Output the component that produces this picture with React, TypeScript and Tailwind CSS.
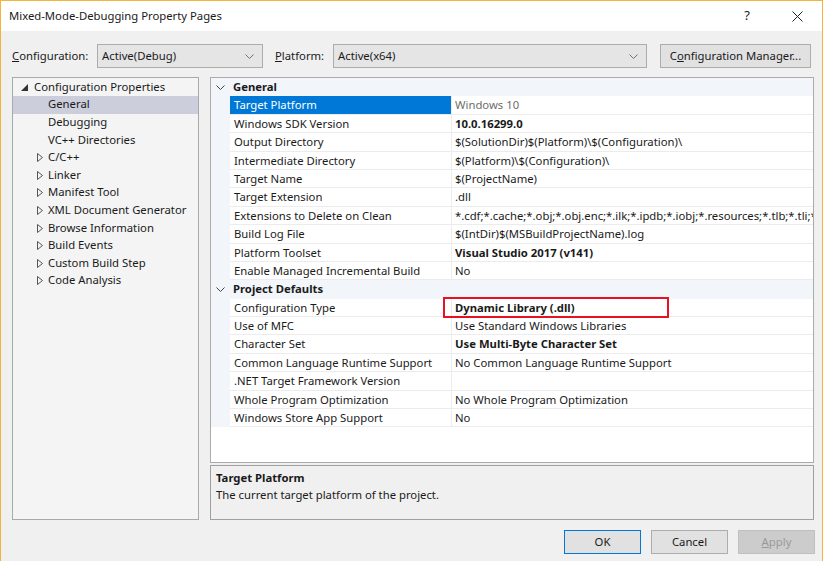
import React from 'react';

const font = { fontFamily: '"Noto Sans", "Open Sans", sans-serif' };

type Row = { name: string; value: string; bold?: boolean; dim?: boolean; selected?: boolean; marked?: boolean };

const general: Row[] = [
  { name: 'Target Platform', value: 'Windows 10', dim: true, selected: true },
  { name: 'Windows SDK Version', value: '10.0.16299.0', bold: true },
  { name: 'Output Directory', value: '$(SolutionDir)$(Platform)\\$(Configuration)\\' },
  { name: 'Intermediate Directory', value: '$(Platform)\\$(Configuration)\\' },
  { name: 'Target Name', value: '$(ProjectName)' },
  { name: 'Target Extension', value: '.dll' },
  {
    name: 'Extensions to Delete on Clean',
    value: '*.cdf;*.cache;*.obj;*.obj.enc;*.ilk;*.ipdb;*.iobj;*.resources;*.tlb;*.tli;*.tlh;*.tmp;*.rsp;*.pgc;*.pgd;*.meta',
  },
  { name: 'Build Log File', value: '$(IntDir)$(MSBuildProjectName).log' },
  { name: 'Platform Toolset', value: 'Visual Studio 2017 (v141)', bold: true },
  { name: 'Enable Managed Incremental Build', value: 'No' },
];

const defaults: Row[] = [
  { name: 'Configuration Type', value: 'Dynamic Library (.dll)', bold: true, marked: true },
  { name: 'Use of MFC', value: 'Use Standard Windows Libraries' },
  { name: 'Character Set', value: 'Use Multi-Byte Character Set', bold: true },
  { name: 'Common Language Runtime Support', value: 'No Common Language Runtime Support' },
  { name: '.NET Target Framework Version', value: '' },
  { name: 'Whole Program Optimization', value: 'No Whole Program Optimization' },
  { name: 'Windows Store App Support', value: 'No' },
];

const treeItems = [
  { label: 'General', selected: true },
  { label: 'Debugging' },
  { label: 'VC++ Directories' },
  { label: 'C/C++', collapsed: true },
  { label: 'Linker', collapsed: true },
  { label: 'Manifest Tool', collapsed: true },
  { label: 'XML Document Generator', collapsed: true },
  { label: 'Browse Information', collapsed: true },
  { label: 'Build Events', collapsed: true },
  { label: 'Custom Build Step', collapsed: true },
  { label: 'Code Analysis', collapsed: true },
];

function Chevron({ color = '#606060' }: { color?: string }) {
  return (
    <svg width="9" height="5" viewBox="0 0 9 5">
      <polyline points="0.5,0.5 4.5,4.5 8.5,0.5" fill="none" stroke={color} strokeWidth="1" />
    </svg>
  );
}

function Combo({ value, width }: { value: string; width: string }) {
  return (
    <div className={`${width} h-[24px] flex items-center justify-between bg-[#e5e5e5] border border-[#acacac] pl-[4px] pr-[8px]`}>
      <span>{value}</span>
      <Chevron color="#707070" />
    </div>
  );
}

function Category({ title }: { title: string }) {
  return (
    <div className="flex h-[18.4px] bg-[#f2f5fa]">
      <div className="w-[19px] shrink-0 flex items-center justify-center">
        <Chevron color="#444" />
      </div>
      <div className="flex-1 pl-[3px] font-bold leading-[18px]">{title}</div>
    </div>
  );
}

function PropRow({ row }: { row: Row }) {
  return (
    <div className="flex h-[18.4px]">
      <div className="w-[19px] shrink-0 bg-[#f2f5fa]" />
      <div
        className={`w-[222px] shrink-0 border-r border-b border-[#ececec] pl-[4px] leading-[17px] whitespace-nowrap overflow-hidden ${
          row.selected ? 'bg-[#0078d7] text-white' : ''
        }`}
      >
        {row.name}
      </div>
      <div className="relative flex-1 min-w-0 border-b border-[#ececec] pl-[3px] leading-[17px] whitespace-nowrap">
        <div className={`overflow-hidden ${row.bold ? 'font-bold' : ''} ${row.dim ? 'text-[#6d6d6d]' : ''}`}>{row.value || '\u00a0'}</div>
        {row.marked && <div className="absolute left-[-9px] top-[-2px] w-[226px] h-[21px] border-2 border-[#e81123]" />}
      </div>
    </div>
  );
}

function Btn({ children, focused, disabled }: { children: React.ReactNode; focused?: boolean; disabled?: boolean }) {
  return (
    <div
      className={`w-[77px] h-[24px] flex items-center justify-center border ${
        disabled
          ? 'bg-[#cccccc] border-[#bfbfbf] text-[#9a9a9a]'
          : focused
          ? 'bg-[#e1e1e1] border-[#0078d7]'
          : 'bg-[#e1e1e1] border-[#adadad]'
      }`}
    >
      {children}
    </div>
  );
}

export default function App() {
  return (
    <div className="w-[823px] h-[561px] bg-[#f0f0f0] border-l border-t border-r border-[#f2b53a] text-[11.3px] text-[#1a1a1a] overflow-hidden" style={font}>
      {/* title bar */}
      <div className="h-[30px] bg-white flex items-center pl-[8px]">
        <span className="flex-1">Mixed-Mode-Debugging Property Pages</span>
        <span className="w-[50px] text-center text-[13px]">?</span>
        <div className="w-[50px] flex items-center justify-center">
          <svg width="11" height="11" viewBox="0 0 11 11">
            <path d="M0.5 0.5 L10.5 10.5 M10.5 0.5 L0.5 10.5" stroke="#222" strokeWidth="1" />
          </svg>
        </div>
      </div>

      {/* configuration row */}
      <div className="flex items-center mt-[13px] pl-[11px]">
        <span className="w-[85px]">
          <span className="underline">C</span>onfiguration:
        </span>
        <Combo value="Active(Debug)" width="w-[166px]" />
        <span className="w-[58px] ml-[12px]">
          <span className="underline">P</span>latform:
        </span>
        <Combo value="Active(x64)" width="w-[314px]" />
        <div className="ml-[13px] w-[151px] h-[24px] flex items-center justify-center bg-[#e1e1e1] border border-[#adadad]">
          <span>
            C<span className="underline">o</span>nfiguration Manager...
          </span>
        </div>
      </div>

      {/* panels */}
      <div className="flex mt-[9px] pl-[11px] gap-[11px] h-[443px]">
        {/* tree */}
        <div className="w-[187px] h-[443px] bg-[#f4f4f4] border border-[#a9a9a9] pt-[0.5px]">
          <div className="flex items-center h-[17.6px] pl-[8px]">
            <svg width="7" height="7" viewBox="0 0 7 7" className="mr-[6px]">
              <polygon points="7,0 7,7 0,7" fill="#333" />
            </svg>
            <span>Configuration Properties</span>
          </div>
          {treeItems.map((t) => (
            <div key={t.label} className={`flex items-center h-[17.6px] ${t.selected ? 'bg-[#cccedb]' : ''}`}>
              <div className="w-[34px] flex justify-end pr-[4px]">
                {t.collapsed && (
                  <svg width="6" height="9" viewBox="0 0 6 9">
                    <polygon points="0.5,0.5 5.5,4.5 0.5,8.5" fill="none" stroke="#555" strokeWidth="1" />
                  </svg>
                )}
              </div>
              <span className="pl-[1px]">{t.label}</span>
            </div>
          ))}
        </div>

        {/* grid + description */}
        <div className="w-[604px] flex flex-col">
          <div className="h-[387px] bg-white border border-[#ababab] overflow-hidden">
            <Category title="General" />
            {general.map((r) => (
              <PropRow key={r.name} row={r} />
            ))}
            <Category title="Project Defaults" />
            {defaults.map((r) => (
              <PropRow key={r.name} row={r} />
            ))}
          </div>
          <div className="mt-[2px] h-[55px] border border-[#a0a0a0] bg-[#f0f0f0] pl-[5px] pt-[3px] leading-[17px]">
            <div className="font-bold">Target Platform</div>
            <div>The current target platform of the project.</div>
          </div>
        </div>
      </div>

      {/* buttons */}
      <div className="flex justify-end gap-[10px] mt-[10px] pr-[7px]">
        <Btn focused>OK</Btn>
        <Btn>Cancel</Btn>
        <Btn disabled>
          <span>
            <span className="underline">A</span>pply
          </span>
        </Btn>
      </div>
    </div>
  );
}
